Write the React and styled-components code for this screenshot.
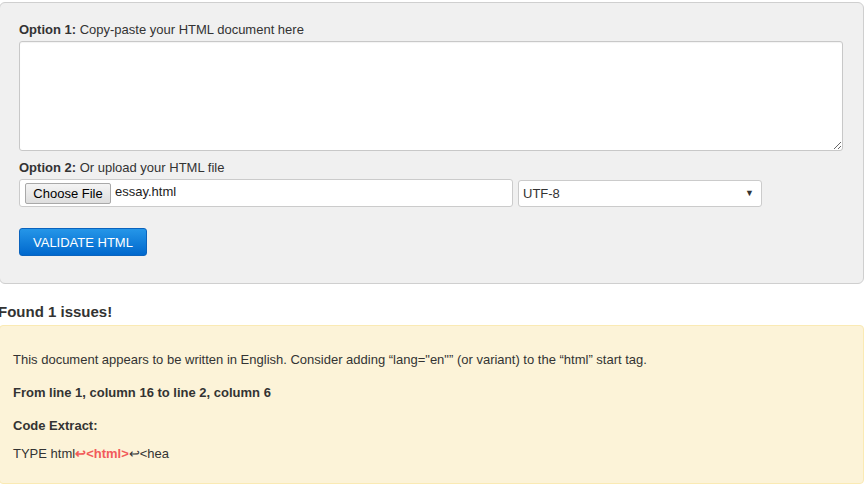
import React from 'react';
import styled, { createGlobalStyle } from 'styled-components';

const GlobalStyle = createGlobalStyle`
  html, body {
    margin: 0;
    padding: 0;
    background: #fff;
    overflow: hidden;
  }
  body {
    font-family: "Liberation Sans", Arial, sans-serif;
    font-size: 13px;
    color: #333;
  }
`;

const Page = styled.div`
  width: 865px;
  margin-left: -1px;
  padding-top: 2px;
`;

const Panel = styled.form`
  box-sizing: border-box;
  width: 865px;
  background: #f0f0f0;
  border: 1px solid #cfcfcf;
  border-radius: 6px;
  padding: 18px 20px 27px 19px;
`;

const Label = styled.div`
  line-height: 18px;
  font-size: 13px;
  color: #333;
  margin-bottom: 2px;
  margin-top: ${p => p.$top || 0}px;

  b {
    font-weight: bold;
  }
`;

const TextArea = styled.textarea`
  display: block;
  box-sizing: border-box;
  width: 824px;
  height: 110px;
  border: 1px solid #c8c8c8;
  border-radius: 3px;
  background: #fff;
  box-shadow: inset 0 1px 1px rgba(0, 0, 0, 0.05);
  resize: both;
  outline: none;
`;

const Row = styled.div`
  display: flex;
  align-items: center;
  gap: 5px;
`;

const FileBox = styled.div`
  box-sizing: border-box;
  width: 494px;
  height: 28px;
  background: #fff;
  border: 1px solid #cbcbcb;
  border-radius: 3px;
  display: flex;
  align-items: center;
  padding-left: 5px;
  gap: 4px;
`;

const ChooseButton = styled.button`
  box-sizing: border-box;
  height: 21px;
  width: 86px;
  padding: 0;
  font-family: "Liberation Sans", Arial, sans-serif;
  font-size: 13px;
  color: #000;
  background: linear-gradient(#f4f4f4, #dedede);
  border: 1px solid #a9a9a9;
  border-radius: 2px;
`;

const FileName = styled.span`
  font-size: 13px;
  color: #222;
  align-self: flex-start;
  margin-top: 4px;
`;

const SelectBox = styled.div`
  box-sizing: border-box;
  width: 244px;
  height: 27px;
  background: #fff;
  border: 1px solid #cbcbcb;
  border-radius: 3px;
  display: flex;
  align-items: center;
  justify-content: space-between;
  padding: 0 7px 0 4px;
  font-size: 13px;
  color: #333;
`;

const Arrow = styled.span`
  font-size: 9px;
  color: #333;
`;

const ValidateButton = styled.button`
  margin-top: 21px;
  box-sizing: border-box;
  height: 28px;
  padding: 0 13px;
  font-family: "Liberation Sans", Arial, sans-serif;
  font-size: 13px;
  color: #fff;
  background: linear-gradient(#2596e8, #0068cd);
  border: 1px solid #0a63bd;
  border-radius: 3px;
  text-transform: uppercase;
`;

const Heading = styled.h3`
  margin: 19px 0 4px;
  font-size: 15px;
  line-height: 18px;
  font-weight: bold;
  color: #333;
  position: relative;
  left: -1px;
`;

const Alert = styled.div`
  box-sizing: border-box;
  width: 865px;
  height: 159px;
  background: #fcf3d8;
  border: 1px solid #faeab4;
  border-radius: 4px;
  padding: 25px 14px 0 13px;
`;

const Para = styled.p`
  margin: 0 0 ${p => p.$gap ?? 15}px;
  line-height: 18px;
  font-size: 13px;
  font-weight: ${p => (p.$bold ? 'bold' : 'normal')};
  color: #333;
`;

const Mark = styled.strong`
  color: #f25a5a;
`;

export default function App() {
  return (
    <Page>
      <GlobalStyle />
      <Panel onSubmit={e => e.preventDefault()}>
        <Label>
          <b>Option 1:</b> Copy-paste your HTML document here
        </Label>
        <TextArea />
        <Label $top={8}>
          <b>Option 2:</b> Or upload your HTML file
        </Label>
        <Row>
          <FileBox>
            <ChooseButton type="button">Choose File</ChooseButton>
            <FileName>essay.html</FileName>
          </FileBox>
          <SelectBox>
            <span>UTF-8</span>
            <Arrow>▼</Arrow>
          </SelectBox>
        </Row>
        <ValidateButton type="submit">Validate HTML</ValidateButton>
      </Panel>
      <Heading>Found 1 issues!</Heading>
      <Alert>
        <Para>
          This document appears to be written in English. Consider adding “lang="en"” (or variant) to the “html” start tag.
        </Para>
        <Para $bold>From line 1, column 16 to line 2, column 6</Para>
        <Para $bold $gap={10}>Code Extract:</Para>
        <Para>
          TYPE html<Mark>↩&lt;html&gt;</Mark>↩&lt;hea
        </Para>
      </Alert>
    </Page>
  );
}
